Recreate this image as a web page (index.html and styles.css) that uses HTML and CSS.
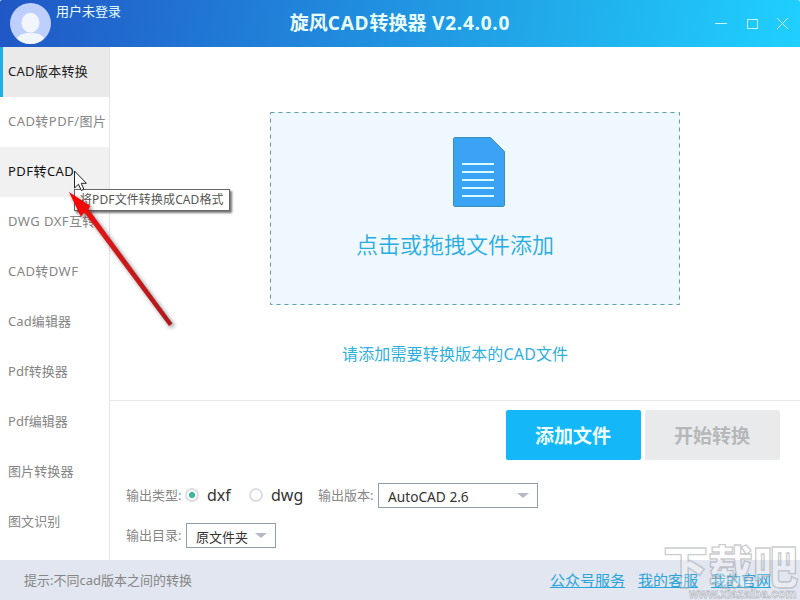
FILE: index.html
```html
<!DOCTYPE html>
<html lang="zh-CN">
<head>
    <meta charset="UTF-8">
    <title>旋风CAD转换器</title>
    <link rel="stylesheet" href="styles.css">
</head>
<body>
    <div class="window">
        <header class="titlebar">
            <div class="user">
                <svg class="avatar" width="41" height="41" viewBox="0 0 41 41">
                    <clipPath id="round"><circle cx="20.5" cy="20.5" r="20.5"/></clipPath>
                    <g clip-path="url(#round)">
                        <rect width="41" height="41" fill="#bfcffb"/>
                        <ellipse cx="20.5" cy="19.7" rx="9" ry="10" fill="#f1f5fc"/>
                        <path d="M5 41C6 32 12 30 20.5 30S35 32 36 41Z" fill="#f1f5fc"/>
                    </g>
                </svg>
                <span class="user-name">用户未登录</span>
            </div>
            <h1>旋风<span class="latin">CAD</span>转换器<span class="latin"> V2.4.0.0</span></h1>
            <svg class="controls" width="76" height="14" viewBox="0 0 76 14" fill="none" stroke="#c9fbff">
                <path d="M0 6.5h12M32.5 2.5h10v9h-10zM62 1l11 11M73 1L62 12"/>
            </svg>
        </header>

        <div class="content">
            <nav class="sidebar">
                <a class="item active">CAD版本转换</a>
                <a class="item wide">CAD转PDF/图片</a>
                <a class="item hover wide">PDF转CAD</a>
                <a class="item wide">DWG DXF互转</a>
                <a class="item wide">CAD转DWF</a>
                <a class="item">Cad编辑器</a>
                <a class="item">Pdf转换器</a>
                <a class="item">Pdf编辑器</a>
                <a class="item">图片转换器</a>
                <a class="item">图文识别</a>
            </nav>

            <main>
                <section class="files">
                    <div class="drop">
                        <svg class="drop-border" width="410" height="193" fill="none" stroke="#5b9fb5" stroke-dasharray="4 4">
                            <rect x="0.5" y="0.5" width="409" height="192"/>
                        </svg>
                        <svg class="doc" width="52" height="70" viewBox="0 0 52 70">
                            <path d="M1.5.5h36l14 14v54l-1 1h-49l-1-1v-67z" fill="#3aa3f3" stroke="#3b8fb5"/>
                            <path d="M9 27h32M9 35h32M9 43h32M9 51h32M9 59h32" stroke="#d5fbff" stroke-width="2"/>
                        </svg>
                        <p class="drop-text">点击或拖拽文件添加</p>
                    </div>
                    <p class="hint">请添加需要转换版本的CAD文件</p>
                </section>

                <section class="output">
                    <div class="buttons">
                        <button class="btn add">添加文件</button>
                        <button class="btn start">开始转换</button>
                    </div>
                    <div class="row">
                        <span class="label">输出类型:</span>
                        <span class="radio checked"></span>
                        <span class="radio-text dxf">dxf</span>
                        <span class="radio"></span>
                        <span class="radio-text dwg">dwg</span>
                        <span class="label">输出版本:</span>
                        <div class="select version"><span>AutoCAD 2.6</span><i class="caret"></i></div>
                    </div>
                    <div class="row">
                        <span class="label">输出目录:</span>
                        <div class="select folder"><span>原文件夹</span><i class="caret"></i></div>
                    </div>
                </section>
            </main>
        </div>

        <footer>
            <span class="tip">提示:不同cad版本之间的转换</span>
            <div class="links">
                <a>公众号服务</a>
                <a>我的客服</a>
                <a>我的官网</a>
            </div>
        </footer>

        <div class="tooltip">将PDF文件转换成CAD格式</div>

        <svg class="pointer" width="130" height="170" viewBox="60 165 130 170">
            <defs>
                <linearGradient id="red" x1="0" y1="0" x2="1" y2="1">
                    <stop offset="0" stop-color="#f00"/>
                    <stop offset="0.35" stop-color="#d81818"/>
                    <stop offset="1" stop-color="#ad1a1c"/>
                </linearGradient>
            </defs>
            <path d="M74.500 171v17l4-3.800 2.800 6.300 2.600-1.200-2.700-6h5.200z" fill="#fff" stroke="#222"/>
            <path class="arrow" d="M69 192L90.500 206L88.500 209L172.500 323.500L169 326L84 212L81 217Z" fill="url(#red)"/>
        </svg>

        <div class="watermark">
            <span class="wm-name">下载吧</span>
            <span class="wm-url">www.xiazaiba.com</span>
        </div>
    </div>
</body>
</html>
```
FILE: styles.css
```css
* {
    box-sizing: border-box;
}
body {
    margin: 0;
    background: #fff;
    font-family: "Noto Sans", "Noto Sans CJK SC", sans-serif;
    font-size: 13px;
    color: #868686;
}
h1, p {
    margin: 0;
}
.window {
    position: relative;
    width: 800px;
    height: 600px;
    overflow: hidden;
    display: flex;
    flex-direction: column;
    white-space: nowrap;
}

/* title bar */
.titlebar {
    height: 47px;
    flex: none;
    display: grid;
    grid-template-columns: 250px 300px 250px;
    background: linear-gradient(100deg, #2057c5 0%, #2187dc 40%, #21a9e9 67%, #1fd0ff 100%);
    border-radius: 2px 2px 0 0;
    color: #e9ffff;
}
.user {
    display: flex;
    padding: 3px 0 0 10px;
    gap: 5px;
}
.user-name {
    line-height: 17px;
}
.titlebar h1 {
    font-size: 19px;
    font-weight: bold;
    line-height: 47px;
    text-align: center;
}
.latin {
    font-family: "Open Sans", "Noto Sans", sans-serif;
    letter-spacing: 0.75px;
}
.controls {
    justify-self: end;
    margin: 17px 9px 0 0;
}

/* left menu */
.content {
    display: flex;
    height: 513px;
    flex: none;
}
.sidebar {
    width: 110px;
    flex: none;
    border-right: 1px solid #e4e4e4;
}
.item {
    display: block;
    height: 50px;
    line-height: 49px;
    padding-left: 8px;
    letter-spacing: 0.1px;
}
.wide {
    letter-spacing: 0.45px;
}
.active {
    background: #eaeaea;
    border-left: 3px solid #22ade6;
    padding-left: 5px;
    letter-spacing: 0.3px;
    color: #222;
}
.hover {
    background: #f1f1f1;
    color: #111;
}

/* file area */
main {
    flex: 1;
}
.files {
    height: 354px;
    border-bottom: 1px solid #e6e8ea;
    padding: 65px 0 0 160px;
}
.drop {
    position: relative;
    width: 410px;
    height: 193px;
    background: #f0f8ff;
    padding-top: 25px;
}
.drop-border {
    position: absolute;
    top: 0;
    left: 0;
}
.doc {
    display: block;
    margin-left: 183px;
}
.drop-text {
    margin: 21px 0 0 86px;
    font-size: 22px;
    font-weight: 350;
    line-height: 32px;
    color: #27ace3;
}
.hint {
    margin: 37px 0 0 72px;
    font-size: 16px;
    line-height: 24px;
    letter-spacing: 0.15px;
    color: #2fafe0;
}

/* output settings */
.output {
    padding: 9px 20px 0 16px;
}
.buttons {
    display: flex;
    justify-content: flex-end;
    gap: 4px;
    margin-bottom: 23px;
}
.btn {
    width: 135px;
    height: 50px;
    border: none;
    border-radius: 2px;
    padding: 0 1px 0 0;
    font-family: inherit;
    font-size: 19px;
    font-weight: bold;
}
.add {
    background: #14b7f8;
    color: #efffff;
}
.start {
    background: #e9eaec;
    color: #b6b7b9;
}
.row {
    display: flex;
    align-items: center;
    height: 25px;
    margin-bottom: 15px;
}
.label {
    width: 60px;
    margin-top: -2px;
}
.radio {
    width: 14px;
    height: 14px;
    margin: -1px 0 0 -1px;
    border: 2px solid #dcdee1;
    border-radius: 50%;
}
.checked {
    background: radial-gradient(circle, #3bb99b 2.7px, #fff 3.5px);
}
.radio-text {
    font-size: 16px;
    line-height: 24px;
    color: #333;
    padding-left: 8px;
    margin-top: -1px;
}
.dxf {
    width: 51px;
}
.dwg {
    width: 55px;
}
.select {
    display: flex;
    align-items: center;
    justify-content: space-between;
    height: 25px;
    border: 1px solid #8f9eab;
    padding: 2px 8px 0 9px;
    color: #333;
}
.version {
    width: 160px;
    font-size: 13.7px;
}
.folder {
    width: 90px;
}
.caret {
    border: 6px solid transparent;
    border-top: 5px solid #b3bac2;
    border-bottom: none;
    margin-top: -3px;
}

/* bottom bar */
footer {
    height: 40px;
    flex: none;
    display: flex;
    align-items: center;
    justify-content: space-between;
    padding: 0 29px 2px 24px;
    background: #e2e6f0;
}
.links {
    display: flex;
    gap: 13px;
    font-size: 15px;
}
.links a {
    color: #2aa5da;
    text-decoration: underline;
}

/* things floating over the window */
.tooltip {
    position: absolute;
    left: 74px;
    top: 189px;
    width: 156px;
    height: 22px;
    line-height: 19px;
    padding-left: 5px;
    font-size: 12px;
    letter-spacing: 0.1px;
    background: #fff;
    border: 1px solid #666;
    box-shadow: 2px 2px 2px #777;
    color: #555;
}
.pointer {
    position: absolute;
    left: 60px;
    top: 165px;
}
.arrow {
    filter: drop-shadow(2px 2px 2px rgba(0, 0, 0, 0.45));
}
.watermark {
    position: absolute;
    left: 663px;
    top: 537px;
    color: rgba(255, 255, 255, 0.25);
    font-weight: 900;
}
.wm-name {
    display: block;
    font-size: 45px;
    line-height: 60px;
    -webkit-text-stroke: 1.3px rgba(150, 152, 158, 0.5);
}
.wm-url {
    position: absolute;
    left: 26px;
    top: 48px;
    font-size: 12.2px;
    line-height: 18px;
    font-family: "Liberation Sans", sans-serif;
    color: rgba(245, 246, 250, 0.8);
    -webkit-text-stroke: 0.8px rgba(140, 143, 150, 0.5);
}
```
